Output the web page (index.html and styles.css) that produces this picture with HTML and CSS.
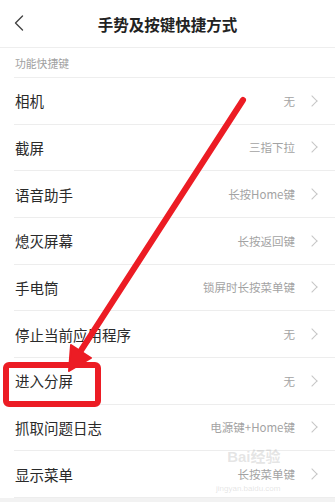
FILE: index.html
```html
<!DOCTYPE html>
<html lang="zh-CN">
<head>
<meta charset="utf-8">
<title>手势及按键快捷方式</title>
<link rel="stylesheet" href="styles.css">
</head>
<body>
<div class="page">
  <header class="topbar">
    <svg class="back" width="10" height="16" viewBox="0 0 10 16"><path d="M8.5 1 L1.5 8 L8.5 15" fill="none" stroke="#444" stroke-width="1.4" stroke-linecap="round" stroke-linejoin="round"/></svg>
    <h1 class="title">手势及按键快捷方式</h1>
  </header>
  <div class="section">功能快捷键</div>
  <ul class="list">
    <li class="row"><span class="label">相机</span><span class="value">无</span><span class="chev"></span></li>
    <li class="row"><span class="label">截屏</span><span class="value">三指下拉</span><span class="chev"></span></li>
    <li class="row"><span class="label">语音助手</span><span class="value">长按Home键</span><span class="chev"></span></li>
    <li class="row"><span class="label">熄灭屏幕</span><span class="value">长按返回键</span><span class="chev"></span></li>
    <li class="row"><span class="label">手电筒</span><span class="value">锁屏时长按菜单键</span><span class="chev"></span></li>
    <li class="row"><span class="label">停止当前应用程序</span><span class="value">无</span><span class="chev"></span></li>
    <li class="row"><span class="label">进入分屏</span><span class="value">无</span><span class="chev"></span></li>
    <li class="row"><span class="label">抓取问题日志</span><span class="value">电源键+Home键</span><span class="chev"></span></li>
    <li class="row"><span class="label">显示菜单</span><span class="value">长按菜单键</span><span class="chev"></span></li>
  </ul>
  <div class="bottom"></div>
  <div class="watermark"><span class="wm-big">Bai经验</span><span class="wm-small">jingyan.baidu.com</span></div>
  <svg class="annot" width="335" height="502" viewBox="0 0 335 502">
    <line x1="243" y1="100" x2="80" y2="352" stroke="#ec1c24" stroke-width="6" stroke-linecap="round"/>
    <polygon points="69,371 71,345 91,358" fill="#ec1c24" stroke="#ec1c24" stroke-width="2" stroke-linejoin="round"/>
    <rect x="6" y="365" width="92" height="39" rx="3" fill="none" stroke="#ec1c24" stroke-width="6"/>
  </svg>
</div>
</body>
</html>
```
FILE: styles.css
```css
html, body {
  margin: 0;
  padding: 0;
  background: #ffffff;
}
body {
  font-family: "Noto Sans CJK SC", "Noto Sans", "Liberation Sans", sans-serif;
  color: #333;
}
.page {
  position: relative;
  width: 335px;
  height: 502px;
  overflow: hidden;
  background: #fff;
}
.topbar {
  height: 48px;
  box-sizing: border-box;
  border-bottom: 1px solid #eeeeee;
  display: flex;
  align-items: center;
  justify-content: center;
  position: relative;
}
.back {
  position: absolute;
  left: 14px;
  top: 15px;
}
.title {
  margin: 0;
  font-size: 15.5px;
  font-weight: 700;
  color: #222;
  letter-spacing: 0;
}
.section {
  height: 30px;
  box-sizing: border-box;
  border-bottom: 1px solid #eeeeee;
  margin-left: 14px;
  display: flex;
  align-items: center;
  padding-left: 1px;
  font-size: 10.8px;
  color: #a0a0a0;
}
.list {
  list-style: none;
  margin: 0;
  padding: 0;
}
.row {
  height: 46.67px;
  box-sizing: border-box;
  border-bottom: 1px solid #ededed;
  margin-left: 14px;
  padding-left: 1px;
  padding-right: 17px;
  display: flex;
  align-items: center;
}
.label {
  flex: 1;
  font-size: 14.5px;
  color: #2a2a2a;
}
.value {
  font-size: 11.5px;
  color: #a3a3a3;
  margin-right: 13px;
}
.chev {
  width: 7px;
  height: 7px;
  border-top: 1.2px solid #c6c6c6;
  border-right: 1.2px solid #c6c6c6;
  transform: rotate(45deg);
  margin-right: 2px;
}
.bottom {
  height: 6px;
  background: #f2f2f2;
}
.watermark {
  position: absolute;
  left: 216px;
  top: 449px;
  display: flex;
  flex-direction: column;
  align-items: flex-end;
  gap: 20px;
  color: rgba(180, 180, 180, 0.35);
  font-family: "Liberation Sans", "Noto Sans CJK SC", sans-serif;
  pointer-events: none;
}
.wm-big {
  font-size: 15px;
  font-weight: 700;
  line-height: 15px;
}
.wm-small {
  font-size: 8px;
  line-height: 9px;
}
.annot {
  position: absolute;
  left: 0;
  top: 0;
  pointer-events: none;
}
```
